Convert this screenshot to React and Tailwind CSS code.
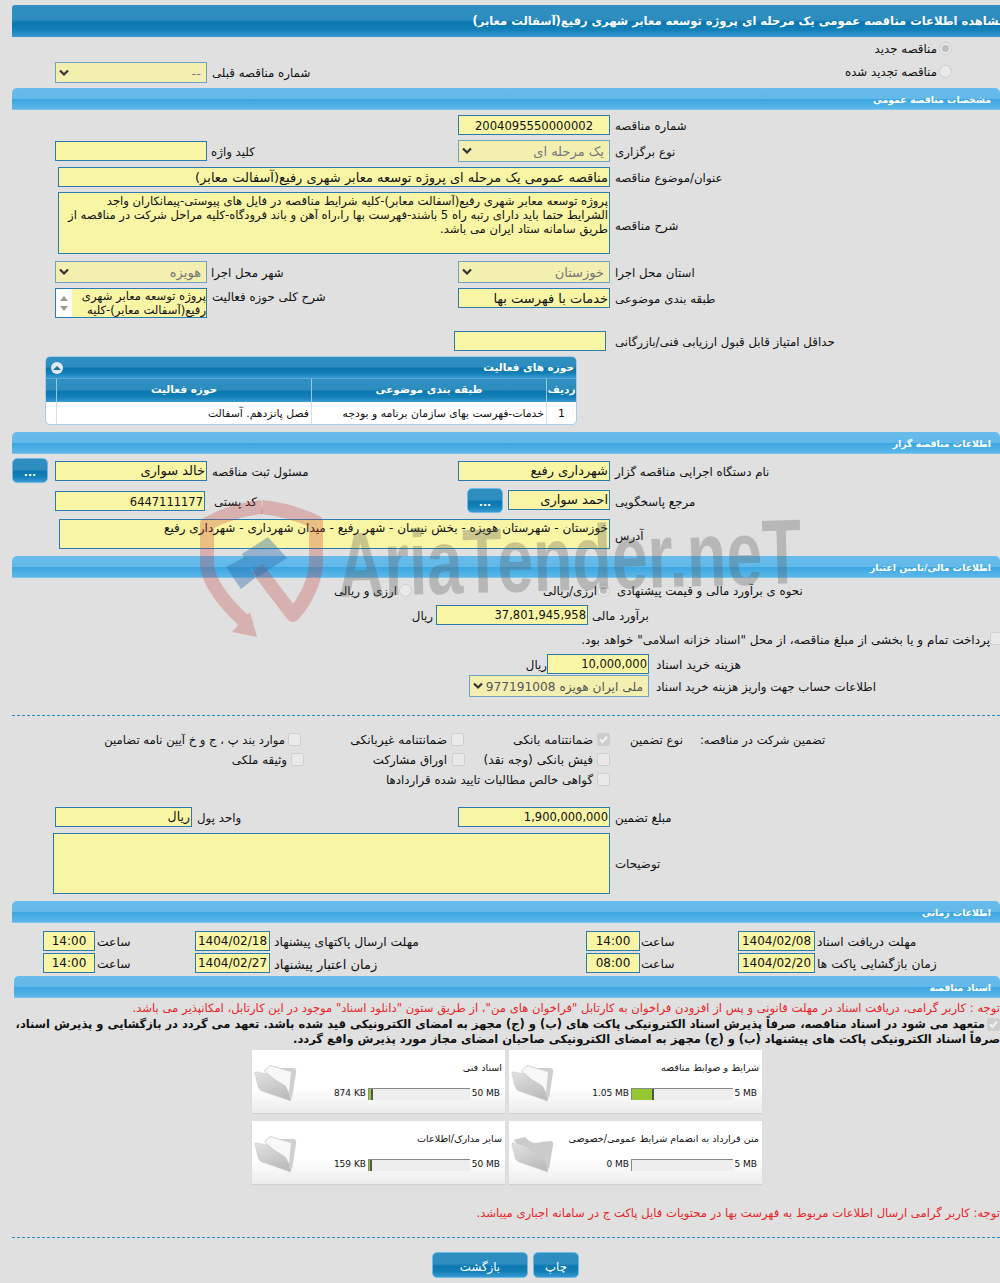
import React from "react";

const barLight = "bg-[linear-gradient(#66bbea_0,#62b9e9_50%,#3aa6e1_52%,#5cb7e9_100%)]";
const barDark = "bg-[linear-gradient(#2f8fc0_0,#2e8dbf_45%,#0a77b0_55%,#1480b8_78%,#389ad2_100%)]";

const Text = ({ children, className = "" }) => (
  <span dir="rtl" className={`inline-block pt-[3px] whitespace-nowrap ${className}`}>
    {children}
  </span>
);

// label that hugs the box on its left, vertically centred in the row
const Label = ({ children, className = "" }) => (
  <div className={`flex items-center ${className}`}>
    <Text>{children}</Text>
  </div>
);

// cell whose text is anchored to its right edge
const Cell = ({ children, className = "" }) => (
  <div className={`flex items-center justify-end shrink-0 ${className}`}>
    <Text>{children}</Text>
  </div>
);

const Box = ({ children, className = "", ltr }) => (
  <div
    dir={ltr ? "ltr" : "rtl"}
    className={`shrink-0 border border-[#2a7cb0] bg-[#f8f5a4] px-px text-[#111] overflow-hidden whitespace-nowrap leading-[18px] ${className}`}
  >
    {children}
  </div>
);

const Select = ({ children, className = "" }) => (
  <div className={`shrink-0 flex items-center justify-between border border-[#6fa3c4] bg-[#f3efb0] pl-[3px] pr-[5px] text-[#777] text-[13px] ${className}`}>
    <svg width="10" height="8" viewBox="0 0 10 8">
      <path d="M1 1.5 L5 5.5 L9 1.5" fill="none" stroke="#333" strokeWidth="2.2" />
    </svg>
    <Text className="!pt-[2px]">{children}</Text>
  </div>
);

const SectionBar = ({ title, className = "" }) => (
  <div dir="rtl" className={`h-[22px] rounded-t-[5px] border-b border-[#7cc6ee] ${barLight} text-white font-bold text-[9.3px] leading-[23px] pr-[9px] ${className}`}>
    {title}
  </div>
);

const Radio = ({ checked }) => (
  <div className="shrink-0 w-[13px] h-[13px] rounded-full border border-[#cfcfcf] bg-[#e9e9e9] flex items-center justify-center">
    {checked && <div className="w-[7px] h-[7px] rounded-full bg-[#bdbdbd]" />}
  </div>
);

const Check = ({ checked, className = "" }) => (
  <div className={`shrink-0 w-[13px] h-[13px] rounded-[2px] border border-[#cfcfcf] flex items-center justify-center ${checked ? "bg-[#cdcdcd]" : "bg-[#e9e9e9]"} ${className}`}>
    {checked && (
      <svg width="11" height="11" viewBox="0 0 11 11">
        <path d="M2 5.5 L4.5 8 L9 2.5" fill="none" stroke="#f2f2f2" strokeWidth="2" />
      </svg>
    )}
  </div>
);

const DotsButton = ({ className = "" }) => (
  <div className={`shrink-0 w-9 h-[25px] rounded-[5px] border border-[#6cbbe6] ${barDark} text-white text-center font-bold text-[11px] leading-[28px] ${className}`}>
    ...
  </div>
);

const Folder = ({ empty }) => (
  <svg width="44" height="38" viewBox="0 0 44 38" className="shrink-0 ml-[2px] mt-[14px]">
    <defs>
      <linearGradient id="flap" x1="0" y1="0" x2="0.4" y2="1">
        <stop offset="0" stopColor="#e2e2e2" />
        <stop offset="1" stopColor="#bdbdbd" />
      </linearGradient>
    </defs>
    {empty ? (
      <path d="M3 6 Q3 4 6 4 L14 2 Q18 7 24 8 L39 6 Q43 6 42 10 L38 34 Z" fill="#cbcbcb" />
    ) : (
      <>
        <path d="M10 7 L16 1 L26 4 L40 4 Q43 5 42 9 L38 34 Z" fill="#cfcfcf" />
        <path d="M11 7 L16 2 L37 8 L35 28 Z" fill="#f8f8f8" />
      </>
    )}
    <path d="M1 10 Q0 7 3 8 L13 10 Q21 16 30 21 Q32 22 33 25 L37 35 Q37 38 34 36 L8 27 Q5 26 4 22 Z" fill="url(#flap)" stroke="#c4c4c4" strokeWidth="0.5" />
  </svg>
);

const FileCard = ({ title, used, max, fill, maxW = "w-[30px]", empty }) => (
  <div className="flex w-[253px] h-[63px] bg-[linear-gradient(#fff_0,#fff_60%,#ececec_100%)] shadow-[0_1px_1px_#d0d0d0]">
    <Folder empty={empty} />
    <div className="flex-1 flex flex-col items-end pr-[5px] text-[9.6px]">
      <div className="mt-[9px] h-[16px] flex items-center -mr-[2px]">
        <Text>{title}</Text>
      </div>
      <div className="mt-[13px] flex items-center h-[12px] text-[9px] whitespace-nowrap">
        <span className="mr-[2px]">{used}</span>
        <div className="w-[102px] h-[12px] bg-[#eee] border-t border-l border-[#888] flex">
          {fill && <div className={`h-full border-r-2 border-[#555] bg-[#96c832] ${fill}`} />}
        </div>
        <span className={`${maxW} text-right`}>{max}</span>
      </div>
    </div>
  </div>
);

const Watermark = () => (
  <div className="absolute inset-0 pointer-events-none overflow-hidden z-10">
    <svg width="1000" height="1283" viewBox="0 0 1000 1283" className="absolute left-0 top-0">
      <g fill="none" stroke="#c03030" strokeOpacity="0.27" strokeWidth="14" strokeLinejoin="round">
        <path d="M262 507 Q290 510 316 522 L316 565 Q313 592 293 615 L257 568" />
        <path d="M262 507 Q232 510 207 524 L207 565 Q209 588 243 620" />
      </g>
      <path d="M257 637 L232 632 L250 612 Z" fill="#c03030" fillOpacity="0.27" />
      <g fill="#2a6cb0" fillOpacity="0.4">
        <path d="M226 567 L245 557 L255 578 L241 589 Z" />
        <path d="M242 554 L268 537 L287 558 L257 577 Z" />
      </g>
    </svg>
    <div
      className="absolute left-[336px] top-[515px] origin-top-left rotate-[-1.7deg] scale-x-[0.7] text-[92px] leading-[100px] font-bold text-[#5a5a5a]/30 whitespace-nowrap font-['Liberation_Sans',sans-serif]"
    >
      AriaTender.neT
    </div>
  </div>
);

const App = () => {
  return (
    <div className="relative w-[1000px] h-[1283px] overflow-hidden bg-[#e0e0e0] text-[#111] text-[11.8px] font-['DejaVu_Sans',sans-serif]">
      <Watermark />

      {/* Title */}
      <div dir="rtl" className={`mt-[5px] ml-[12px] w-[1000px] h-[32px] inline-block rounded-t-[3px] ${barDark} text-white font-bold text-[11.5px] leading-[32px] pr-[6px] whitespace-nowrap overflow-hidden align-top`}>
        مشاهده اطلاعات مناقصه عمومی یک مرحله ای پروژه توسعه معابر شهری رفیع(آسفالت معابر)
      </div>

      {/* Intro */}
      <div className="flex h-[51px]">
        <div className="flex w-[458px] pl-[55px] pt-[25px] h-[46px]">
          <Select className="w-[152px] h-[21px]">--</Select>
          <Label className="ml-[5px]">شماره مناقصه قبلی</Label>
        </div>
        <div className="flex-1 flex flex-col items-end pr-[48px] pt-[5px] gap-[10px]">
          <div className="flex items-center h-[13px] gap-[2px]">
            <Text>مناقصه جدید</Text>
            <Radio checked />
          </div>
          <div className="flex items-center h-[13px] gap-[2px]">
            <Text>مناقصه تجدید شده</Text>
            <Radio />
          </div>
        </div>
      </div>

      {/* General */}
      <SectionBar title="مشخصات مناقصه عمومی" className="ml-[12px]" />

      <div className="flex mt-[5px] h-5 pl-[458px]">
        <Box ltr className="w-[152px] text-center text-[11.6px] !leading-[20px]">2004095550000002</Box>
        <Label className="ml-[5px]">شماره مناقصه</Label>
      </div>

      <div className="flex mt-[5px] h-[22px]">
        <div className="flex w-[458px] pl-[55px] pt-px">
          <Box className="w-[152px] h-5" />
          <Label className="ml-[4px] h-5">کلید واژه</Label>
        </div>
        <Select className="w-[152px]">یک مرحله ای</Select>
        <Label className="ml-[5px]">نوع برگزاری</Label>
      </div>

      <div className="flex mt-[5px] h-5 pl-[58px]">
        <Box className="w-[552px] text-[13px] !leading-[20px]">مناقصه عمومی یک مرحله ای پروژه توسعه معابر شهری رفیع(آسفالت معابر)</Box>
        <Label className="ml-[5px]">عنوان/موضوع مناقصه</Label>
      </div>

      <div className="flex mt-[5px] h-[62px] pl-[58px]">
        <Box className="w-[552px] text-[11.6px] !leading-[14px] pt-px">
          پروژه توسعه معابر شهری رفیع(آسفالت معابر)-کلیه شرایط مناقصه در فایل های پیوستی-پیمانکاران واجد
          <br />
          الشرایط حتما باید دارای رتبه راه 5 باشند-فهرست بها را،راه آهن و باند فرودگاه-کلیه مراحل شرکت در مناقصه از
          <br />
          طریق سامانه ستاد ایران می باشد.
        </Box>
        <Label className="ml-[5px] pt-[4px]">شرح مناقصه</Label>
      </div>

      <div className="flex mt-[7px] h-[22px]">
        <div className="flex w-[458px] pl-[55px]">
          <Select className="w-[152px]">هویزه</Select>
          <Label className="ml-[4px]">شهر محل اجرا</Label>
        </div>
        <Select className="w-[152px]">خوزستان</Select>
        <Label className="ml-[5px]">استان محل اجرا</Label>
      </div>

      <div className="flex mt-[5px] h-[30px]">
        <div className="flex w-[458px] pl-[55px]">
          <div className="flex w-[152px] shrink-0 border border-[#2a7cb0] bg-[#f8f5a4]">
            <div className="w-[16px] shrink-0 bg-white flex flex-col items-center justify-center gap-[5px]">
              <div className="w-0 h-0 border-x-[4px] border-x-transparent border-b-[5px] border-b-[#999]" />
              <div className="w-0 h-0 border-x-[4px] border-x-transparent border-t-[5px] border-t-[#999]" />
            </div>
            <div dir="rtl" className="flex-1 whitespace-nowrap leading-[14px] text-[11.6px]">
              پروژه توسعه معابر شهری
              <br />
              رفیع(آسفالت معابر)-کلیه
            </div>
          </div>
          <Label className="ml-[5px] h-4">شرح کلی حوزه فعالیت</Label>
        </div>
        <Box className="w-[152px] h-5 text-[13px] !leading-[20px]">خدمات با فهرست بها</Box>
        <Label className="ml-[5px] h-5">طبقه بندی موضوعی</Label>
      </div>

      <div className="flex mt-[13px] h-5 pl-[454px]">
        <Box className="w-[152px]" />
        <Label className="ml-[9px]">حداقل امتیاز قابل قبول ارزیابی فنی/بازرگانی</Label>
      </div>

      {/* Activity table */}
      <div className="mt-[5px] ml-[45px] w-[532px] h-[69px] rounded-[5px] border border-[#a9cde4] overflow-hidden bg-white text-[10.85px]">
        <div className={`flex items-center h-[22px] ${barDark} border-b border-[#5aa9d6]`}>
          <div className="ml-[5px] w-[12px] h-[12px] rounded-full bg-[#dfe9f2] flex items-center justify-center">
            <div className="w-0 h-0 border-x-[4px] border-x-transparent border-b-[4px] border-b-[#1b6fa3]" />
          </div>
          <div dir="rtl" className="flex-1 pr-[2px] text-white font-bold text-[10.5px]">حوزه های فعالیت</div>
        </div>
        <div className={`flex h-[23px] ${barDark} text-white font-bold text-[10.5px] text-center leading-[21px]`}>
          <div className="w-[11px] shrink-0 border-r border-[#9cc8e2]" />
          <div dir="rtl" className="w-[255px] shrink-0 border-r border-[#9cc8e2]">حوزه فعالیت</div>
          <div dir="rtl" className="w-[235px] shrink-0 border-r border-[#9cc8e2]">طبقه بندی موضوعی</div>
          <div dir="rtl" className="flex-1">ردیف</div>
        </div>
        <div className="flex h-[23px] leading-[23px]">
          <div className="w-[11px] shrink-0 border-r border-[#d5dfe6]" />
          <div dir="rtl" className="w-[255px] shrink-0 border-r border-[#d5dfe6] pr-[2px]">فصل پانزدهم. آسفالت</div>
          <div dir="rtl" className="w-[235px] shrink-0 border-r border-[#d5dfe6] pr-[2px] whitespace-nowrap overflow-hidden">خدمات-فهرست بهای سازمان برنامه و بودجه</div>
          <div className="flex-1 text-center text-[11px]">1</div>
        </div>
      </div>

      {/* Organizer */}
      <SectionBar title="اطلاعات مناقصه گزار" className="mt-[7px] ml-[12px]" />

      <div className="flex mt-[4px] h-[25px]">
        <div className="flex w-[458px] pl-[12px]">
          <DotsButton />
          <Box className="ml-[7px] mt-[3px] w-[152px] h-5 text-[13px]">خالد سواری</Box>
          <Label className="ml-[5px] h-[26px]">مسئول ثبت مناقصه</Label>
        </div>
        <Box className="mt-[3px] w-[152px] h-5 text-[13px]">شهرداری رفیع</Box>
        <Label className="ml-[5px] h-[26px]">نام دستگاه اجرایی مناقصه گزار</Label>
      </div>

      <div className="flex mt-[5px] h-[25px]">
        <div className="flex w-[467px] pl-[55px]">
          <Box ltr className="mt-[3px] w-[150px] h-5 text-right text-[11.5px] !leading-[20px]">6447111177</Box>
          <Label className="ml-[9px] h-[26px]">کد پستی</Label>
        </div>
        <DotsButton />
        <Box className="ml-[5px] mt-[2px] w-[102px] h-5 text-[13px]">احمد سواری</Box>
        <Label className="ml-[5px] h-[26px]">مرجع پاسخگویی</Label>
      </div>

      <div className="flex mt-[6px] h-[30px] pl-[59px]">
        <Box className="w-[551px] text-[12px] !leading-[16px]">خوزستان - شهرستان هویزه - بخش نیسان - شهر رفیع - میدان شهرداری - شهرداری رفیع</Box>
        <Label className="ml-[5px] pt-[2px]">آدرس</Label>
      </div>

      {/* Finance */}
      <SectionBar title="اطلاعات مالی/تامین اعتبار" className="mt-[7px] ml-[12px]" />

      <div className="flex mt-[4px] h-4 pl-[337px] items-center">
        <Cell className="w-[60px]">ارزی و ریالی</Cell>
        <div className="ml-[2px]"><Radio /></div>
        <Cell className="w-[185px]">ارزی/ریالی</Cell>
        <Radio checked />
        <Label className="ml-[7px]">نحوه ی برآورد مالی و قیمت پیشنهادی</Label>
      </div>

      <div className="flex mt-[7px] h-5 pl-[413px]">
        <Cell className="w-[20px]">ریال</Cell>
        <Box ltr className="ml-[3px] w-[152px] text-right text-[11.5px]">37,801,945,958</Box>
        <Label className="ml-[4px]">برآورد مالی</Label>
      </div>

      <div dir="rtl" className="flex mt-[6px] h-[14px] items-center -mr-[3px] text-[12px]">
        <Check />
        <Text>پرداخت تمام و یا بخشی از مبلغ مناقصه، از محل "اسناد خزانه اسلامی" خواهد بود.</Text>
      </div>

      <div className="flex mt-[9px] h-5 pl-[527px]">
        <Cell className="w-[20px]">ریال</Cell>
        <Box ltr className="w-[102px] text-right text-[11.5px]">10,000,000</Box>
        <Label className="ml-[7px] text-[12.2px]">هزینه خرید اسناد</Label>
      </div>

      <div className="flex mt-[1px] h-[22px] pl-[469px]">
        <Select className="w-[180px] !text-[#555] !text-[12.2px]">ملی ایران هویزه 977191008</Select>
        <Label className="ml-[7px]">اطلاعات حساب جهت واریز هزینه خرید اسناد</Label>
      </div>

      <div className="mt-[18px] ml-[12px] border-t border-dashed border-[#2e8dbf]" />

      {/* Guarantee */}
      <div className="flex mt-[13px] h-5 items-center">
        <Cell className="w-[285px] text-[11.6px]">موارد بند پ ، ج و خ آیین نامه تضامین</Cell>
        <Check className="ml-[3px]" />
        <Cell className="w-[146px] text-[12.2px]">ضمانتنامه غیربانکی</Cell>
        <Check className="ml-[4px]" />
        <Cell className="w-[129px] text-[12.2px]">ضمانتنامه بانکی</Cell>
        <Check checked className="ml-[4px]" />
        <Cell className="ml-[20px] w-[53px]">نوع تضمین</Cell>
        <Label className="ml-[17px] text-[11.5px]">تضمین شرکت در مناقصه:</Label>
      </div>
      <div className="flex h-5 items-center">
        <Cell className="w-[287px]">وثیقه ملکی</Cell>
        <Check className="ml-[4px]" />
        <Cell className="w-[143px]">اوراق مشارکت</Cell>
        <Check className="ml-[5px]" />
        <Cell className="w-[128px] text-[12.2px]">فیش بانکی (وجه نقد)</Cell>
        <Check className="ml-[4px]" />
      </div>
      <div className="flex h-5 items-center">
        <Cell className="w-[593px]">گواهی خالص مطالبات تایید شده قراردادها</Cell>
        <Check className="ml-[4px]" />
      </div>

      <div className="flex mt-[18px] h-5">
        <div className="flex w-[458px] pl-[55px]">
          <Box className="w-[137px] text-[12.5px]">ریال</Box>
          <Label className="ml-[5px]">واحد پول</Label>
        </div>
        <Box ltr className="w-[152px] text-right text-[11.5px]">1,900,000,000</Box>
        <Label className="ml-[5px]">مبلغ تضمین</Label>
      </div>

      <div className="flex mt-[6px] h-[61px] pl-[53px]">
        <Box className="w-[557px]" />
        <Label className="ml-[5px]">توضیحات</Label>
      </div>

      {/* Dates */}
      <SectionBar title="اطلاعات زمانی" className="mt-[7px] ml-[12px]" />

      <div className="flex mt-[8px] h-5 pl-[43px] text-[12.3px]">
        <Box ltr className="w-[52px] text-center text-[12px]">14:00</Box>
        <Label className="w-[100px] shrink-0 pl-[2px]">ساعت</Label>
        <Box ltr className="w-[75px] text-center text-[12px]">1404/02/18</Box>
        <Label className="w-[316px] shrink-0 pl-[4px]">مهلت ارسال پاکتهای پیشنهاد</Label>
        <Box ltr className="w-[54px] text-center text-[12px]">14:00</Box>
        <Label className="w-[98px] shrink-0 pl-[1px]">ساعت</Label>
        <Box ltr className="w-[77px] text-center text-[12px]">1404/02/08</Box>
        <Label className="ml-[2px]">مهلت دریافت اسناد</Label>
      </div>
      <div className="flex mt-[2px] h-5 pl-[43px] text-[12.3px]">
        <Box ltr className="w-[52px] text-center text-[12px]">14:00</Box>
        <Label className="w-[100px] shrink-0 pl-[2px]">ساعت</Label>
        <Box ltr className="w-[75px] text-center text-[12px]">1404/02/27</Box>
        <Label className="w-[316px] shrink-0 pl-[4px] text-[13px]">زمان اعتبار پیشنهاد</Label>
        <Box ltr className="w-[54px] text-center text-[12px]">08:00</Box>
        <Label className="w-[98px] shrink-0 pl-[1px]">ساعت</Label>
        <Box ltr className="w-[77px] text-center text-[12px]">1404/02/20</Box>
        <Label className="ml-[2px]">زمان بازگشایی پاکت ها</Label>
      </div>

      {/* Documents */}
      <SectionBar title="اسناد مناقصه" className="mt-[3px] ml-[14px]" />

      <div dir="rtl" className="mt-[2px] h-4 leading-4 whitespace-nowrap text-[#e8262a] text-[11.6px]">
        توجه : کاربر گرامی، دریافت اسناد در مهلت قانونی و پس از افزودن فراخوان به کارتابل "فراخوان های من"، از طریق ستون "دانلود اسناد" موجود در این کارتابل، امکانپذیر می باشد.
      </div>

      <div dir="rtl" className="mt-px h-[30px] leading-[15px] font-bold text-[11.5px] whitespace-nowrap">
        <div className="flex items-center h-[15px]">
          <Check checked className="ml-[2px]" />
          <span>متعهد می شود در اسناد مناقصه، صرفاً پذیرش اسناد الکترونیکی پاکت های (ب) و (ج) مجهز به امضای الکترونیکی قید شده باشد. تعهد می گردد در بازگشایی و پذیرش اسناد،</span>
        </div>
        <div>صرفاً اسناد الکترونیکی پاکت های پیشنهاد (ب) و (ج) مجهز به امضای الکترونیکی صاحبان امضای مجاز مورد پذیرش واقع گردد.</div>
      </div>

      <div className="flex gap-[4px] mt-[3px] pl-[252px]">
        <FileCard title="اسناد فنی" used="874 KB" max="50 MB" fill="w-[4px]" />
        <FileCard title="شرایط و ضوابط مناقصه" used="1.05 MB" max="5 MB" fill="w-[22px]" maxW="w-[24px]" />
      </div>
      <div className="flex gap-[4px] mt-[8px] pl-[252px]">
        <FileCard title="سایر مدارک/اطلاعات" used="159 KB" max="50 MB" fill="w-[3px]" />
        <FileCard title="متن قرارداد به انضمام شرایط عمومی/خصوصی" used="0 MB" max="5 MB" maxW="w-[24px]" empty />
      </div>

      <div dir="rtl" className="mt-[21px] h-4 leading-4 whitespace-nowrap text-[#e8262a] text-[11.6px]">
        توجه: کاربر گرامی ارسال اطلاعات مربوط به فهرست بها در محتویات فایل پاکت ج در سامانه اجباری میباشد.
      </div>

      <div className="mt-[16px] ml-[12px] border-t border-dashed border-[#2e8dbf]" />

      <div className="flex mt-[14px] pl-[432px] gap-[5px]">
        <div dir="rtl" className={`w-[96px] h-[26px] rounded-[5px] border border-[#6cbbe6] ${barDark} text-white text-center leading-[28px]`}>بازگشت</div>
        <div dir="rtl" className={`w-[46px] h-[26px] rounded-[5px] border border-[#6cbbe6] ${barDark} text-white text-center leading-[28px]`}>چاپ</div>
      </div>
    </div>
  );
};

export default App;
